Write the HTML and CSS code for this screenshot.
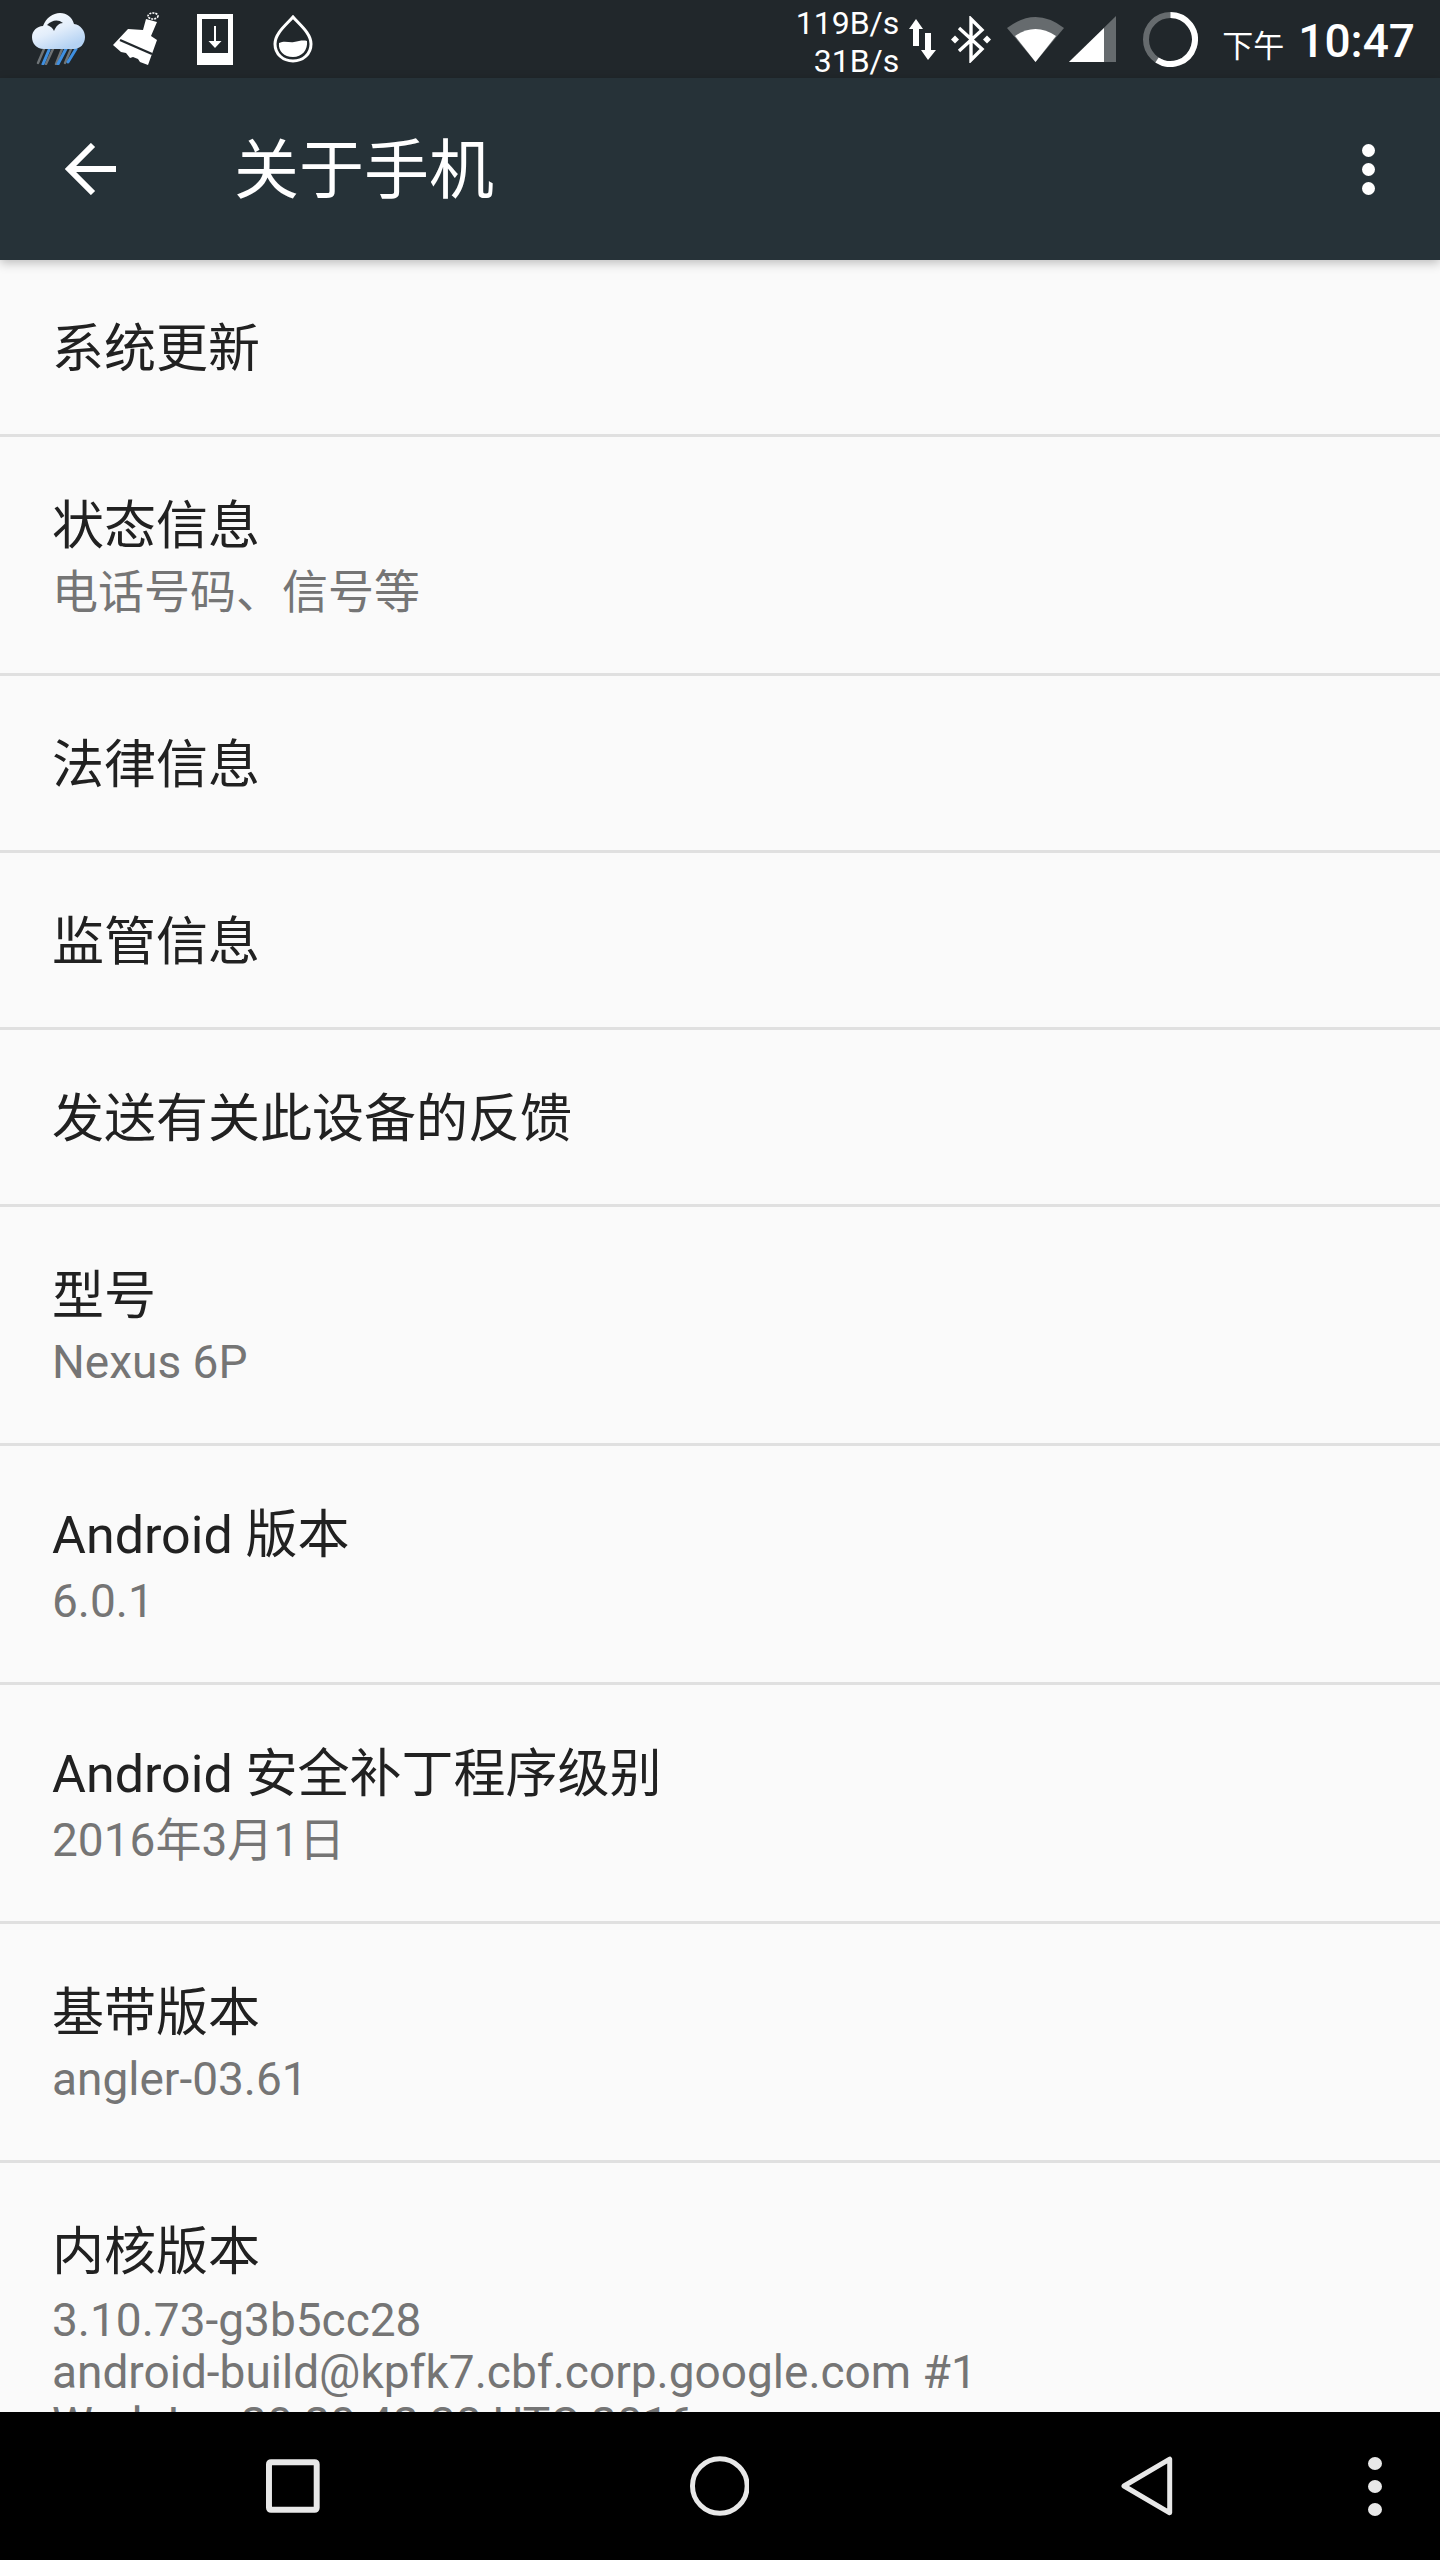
FILE: index.html
```html
<!DOCTYPE html>
<html lang="zh-CN">
<head>
  <meta charset="UTF-8" />
  <title>关于手机</title>
  <link rel="stylesheet" href="styles.css">
</head>
<body>
  <div class="statusbar">
    <div class="notif-icons">
      <svg width="54" height="52" viewBox="0 0 54 52">
        <defs>
          <linearGradient id="cloud" x1="0" y1="0" x2="0.6" y2="1">
            <stop offset="0" stop-color="#ffffff"/>
            <stop offset="0.55" stop-color="#e3eefb"/>
            <stop offset="1" stop-color="#b4d2f3"/>
          </linearGradient>
        </defs>
        <g stroke-width="2.4" stroke-linecap="round" fill="none">
          <path d="M12 36 L6 50 M21 36 L14 51 M30 36 L24 51 M39 36 L33 50" stroke="#6f7477"/>
          <path d="M17 37 L11 51 M36 32 L26 51 M44 36 L36 49" stroke="#3f8fe0" stroke-width="3"/>
        </g>
        <path d="M12 36 C4 36 0 30 0 24 C0 18 5 13 11 13 C14 5 21 0 28 0 C35 0 40 4 42 11 C49 12 53 18 53 24 C53 31 48 36 42 36 Z" fill="url(#cloud)"/>
        <path d="M15 12 C20 7 26 6 31 10 C27 10 24 13 22 18 C21 15 18 13 15 12 Z" fill="#21272b"/>
      </svg>
      <svg class="ic-brush" width="46" height="54" viewBox="0 0 46 54">
        <ellipse cx="40" cy="4" rx="5" ry="3" fill="none" stroke="#fff" stroke-width="1.6" stroke-dasharray="2 1"/>
        <path d="M15 17 L30 18 L33 7 L44 10 L38 24 L44 28 L35 53 L27 50 L25 47 L20 45 L17 46 L13 41 L8 40 L0 33 Z" fill="#fff"/>
        <path d="M7 28 L39 42" stroke="#21272b" stroke-width="2.4"/>
      </svg>
      <svg class="ic-update" width="36" height="51" viewBox="0 0 36 51">
        <path fill-rule="evenodd" d="M0 0 H36 V51 H0 Z M5 5 V39 H31 V5 Z" fill="#fff"/>
        <path d="M17 12 H19 V27 H24.5 L18 34 L11.5 27 H17 Z" fill="#fff"/>
      </svg>
      <svg class="ic-drop" width="40" height="48" viewBox="0 0 40 48">
        <path d="M20 2 C14 9 2 18 2 29 C2 39 10 46 20 46 C30 46 38 39 38 29 C38 18 26 9 20 2 Z" fill="none" stroke="#fff" stroke-width="3"/>
        <path d="M6 28 C12 25 16 28 21 27 C26 26 30 25 34 26 C35 35 29 42 20 42 C11 42 5 36 6 28 Z" fill="#fff"/>
      </svg>
    </div>
    <div class="sys-icons">
      <div class="netspeed"><span>119B/s</span><span>31B/s</span></div>
      <svg class="ic-arrows" width="28" height="41" viewBox="0 0 28 41">
        <path d="M8 0 L15 10 H11 V27 H5 V10 H1 Z M17 14 H23 V31 H28 L20 41 L13 31 H17 Z" fill="#fff"/>
      </svg>
      <svg class="ic-bt" width="40" height="47" viewBox="0 0 40 47">
        <path d="M8 12 L31 33 L20 44 V3 L31 14 L8 35" fill="none" stroke="#fff" stroke-width="3.4"/>
        <path d="M0 23.500 L4 19.500 L8 23.500 L4 27.500 Z M32 23.500 L36 19.500 L40 23.500 L36 27.500 Z" fill="#fff"/>
      </svg>
      <svg class="ic-wifi" width="57" height="45" viewBox="0 0 57 45">
        <path d="M0 11 Q28.500 -11 57 11 L28.500 45 Z" fill="#666b6e"/>
        <path d="M8 19 Q28.500 5 49 19 L28.500 45 Z" fill="#fff"/>
      </svg>
      <svg class="ic-signal" width="47" height="46" viewBox="0 0 47 46">
        <path d="M47 0 V46 H0 Z" fill="#666b6e"/>
        <path d="M35 12 V46 H0 Z" fill="#fff"/>
      </svg>
      <svg class="ic-battery" width="55" height="55" viewBox="0 0 55 55">
        <circle cx="27.500" cy="27.500" r="24.500" fill="none" stroke="#666b6e" stroke-width="6"/>
        <path d="M27.500 3 A24.500 24.500 0 1 1 14 48" fill="none" stroke="#fff" stroke-width="6"/>
      </svg>
      <div class="clock"><span class="ampm">下午</span><span class="time">10:47</span></div>
    </div>
  </div>

  <header class="toolbar">
    <svg width="52" height="52" viewBox="0 0 52 52">
      <path d="M52 26 H5 M29 2 L5 26 L29 50" fill="none" stroke="#fff" stroke-width="6"/>
    </svg>
    <h1 class="title">关于手机</h1>
    <div class="overflow"><i></i><i></i><i></i></div>
  </header>

  <main class="list">
    <div class="row"><div class="row-title">系统更新</div></div>
    <div class="row two"><div class="row-title">状态信息</div><div class="row-sub">电话号码、信号等</div></div>
    <div class="row"><div class="row-title">法律信息</div></div>
    <div class="row"><div class="row-title">监管信息</div></div>
    <div class="row"><div class="row-title">发送有关此设备的反馈</div></div>
    <div class="row two"><div class="row-title">型号</div><div class="row-sub">Nexus 6P</div></div>
    <div class="row two"><div class="row-title">Android 版本</div><div class="row-sub">6.0.1</div></div>
    <div class="row two"><div class="row-title">Android 安全补丁程序级别</div><div class="row-sub">2016年3月1日</div></div>
    <div class="row two"><div class="row-title">基带版本</div><div class="row-sub">angler-03.61</div></div>
    <div class="row two last">
      <div class="row-title">内核版本</div>
      <div class="row-sub kernel">3.10.73-g3b5cc28<br>android-build@kpfk7.cbf.corp.google.com #1<br>Wed Jan 20 20:42:38 UTC 2016</div>
    </div>
  </main>

  <nav class="navbar">
    <svg width="54" height="54" viewBox="0 0 54 54">
      <rect x="3" y="3" width="48" height="48" rx="2" fill="none" stroke="#e8e8e8" stroke-width="6"/>
    </svg>
    <svg class="nav-home" width="60" height="60" viewBox="0 0 60 60">
      <circle cx="30" cy="30" r="27.500" fill="none" stroke="#e8e8e8" stroke-width="5"/>
    </svg>
    <svg class="nav-back" width="52" height="60" viewBox="0 0 52 60">
      <path d="M49 3 V57 L3 30 Z" fill="none" stroke="#e8e8e8" stroke-width="5" stroke-linejoin="round"/>
    </svg>
    <div class="nav-menu"><i></i><i></i><i></i></div>
  </nav>
</body>
</html>
```

FILE: styles.css
```css
html, body {
  margin: 0;
  padding: 0;
}
body {
  width: 1440px;
  height: 2560px;
  display: flex;
  flex-direction: column;
  overflow: hidden;
  background-color: #fafafa;
  font-family: Roboto, "Noto Sans CJK SC", sans-serif;
}
.statusbar {
  height: 78px;
  flex: none;
  display: flex;
  justify-content: space-between;
  align-items: center;
  background-color: #21272b;
  color: white;
  padding: 0 25px 0 32px;
}
.notif-icons, .sys-icons {
  display: flex;
  align-items: center;
}
.ic-brush { margin-left: 27px; }
.ic-update { margin-left: 38px; }
.ic-drop { margin-left: 40px; }
.netspeed {
  display: flex;
  flex-direction: column;
  align-items: flex-end;
  font-size: 32px;
  line-height: 38px;
  padding-top: 6px;
}
.ic-arrows { margin-left: 9px; }
.ic-bt { margin-left: 15px; }
.ic-wifi { margin-left: 16px; }
.ic-signal { margin-left: 5px; }
.ic-battery { margin-left: 27px; }
.clock {
  margin-left: 24px;
  padding-top: 4px;
  white-space: nowrap;
}
.ampm {
  font-size: 31px;
}
.time {
  font-size: 46px;
  font-weight: 500;
  margin-left: 14px;
}
.toolbar {
  height: 182px;
  flex: none;
  display: flex;
  align-items: center;
  background-color: #263238;
  box-shadow: 0 3px 10px rgba(0,0,0,0.25);
  padding: 0 65px 0 64px;
  position: relative;
  color: white;
}
.title {
  margin: 0 0 8px 118px;
  font-size: 65px;
  font-weight: 400;
  flex: 1;
}
.overflow, .nav-menu {
  display: flex;
  flex-direction: column;
}
.overflow {
  gap: 6px;
}
.overflow i {
  width: 13px;
  height: 13px;
  border-radius: 50%;
  background: white;
}
.list {
  flex: 1;
  overflow: hidden;
}
.row {
  padding: 5px 52px 0;
  height: 169px;
  border-bottom: 3px solid #e0e0e0;
  display: flex;
  flex-direction: column;
  justify-content: center;
}
.row.two {
  padding-top: 4px;
  height: 232px;
}
.row.last {
  border-bottom: none;
  justify-content: flex-start;
  padding-top: 58px;
}
.row-title {
  font-size: 52px;
  line-height: 64px;
  color: #212121;
}
.row-sub {
  font-size: 46px;
  line-height: 53px;
  margin-top: 7px;
  color: #757575;
}
.row-sub.kernel {
  line-height: 52px;
  margin-top: 9px;
}
.navbar {
  height: 148px;
  flex: none;
  display: flex;
  align-items: center;
  background-color: #000;
  padding: 0 58px 0 266px;
}
.nav-home { margin-left: 370px; }
.nav-back { margin-left: 372px; }
.nav-menu {
  gap: 10px;
  margin-left: 195px;
}
.nav-menu i {
  width: 14px;
  height: 13px;
  border-radius: 50%;
  background: #e8e8e8;
}
```
